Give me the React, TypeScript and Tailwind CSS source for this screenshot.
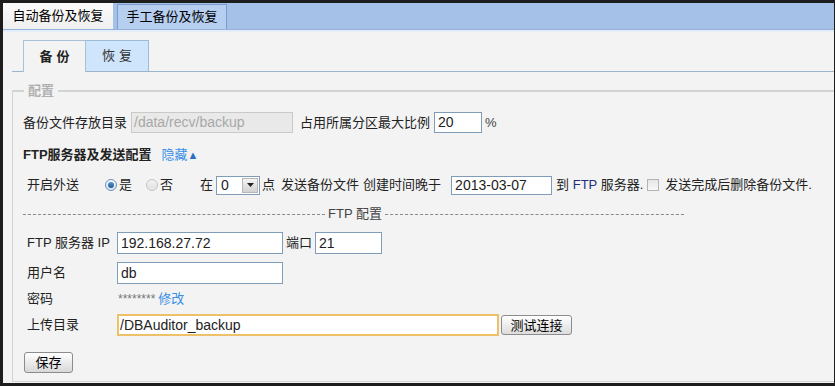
import React from 'react';

const font = { fontFamily: '"Liberation Sans", "Noto Sans CJK SC", sans-serif' };

function Radio({ checked }: { checked: boolean }) {
  return checked ? (
    <span className="flex h-[12px] w-[12px] items-center justify-center rounded-full border border-[#6d8fbd] bg-gradient-to-b from-[#f4f8fc] to-[#d6e2ef]">
      <span className="h-[6px] w-[6px] rounded-full bg-gradient-to-b from-[#5a95d0] to-[#1f5a94]" />
    </span>
  ) : (
    <span className="block h-[12px] w-[12px] rounded-full border border-[#c4c4c4] bg-gradient-to-b from-[#f2f2f2] to-[#e2e2e2]" />
  );
}

function TextBox({ value, className }: { value: string; className: string }) {
  return (
    <div className={`flex items-center border border-[#7f9db9] bg-white pl-[3px] text-[14px] text-[#222] ${className}`}>
      {value}
    </div>
  );
}

function Dashed({ className }: { className: string }) {
  return <div className={`h-0 border-t border-dashed border-[#8a8a8a] ${className}`} />;
}

export default function App() {
  return (
    <div style={font} className="h-[386px] w-[835px] bg-[#1d1d1d] pb-[3px] pl-[3px] pr-[1px] pt-[3px]">
      <div className="flex h-full flex-col overflow-hidden bg-[#f3f3f3] text-[13px] text-[#222]">
        {/* top tabs */}
        <div className="flex h-[27px] items-end border-b border-[#98b1d6] bg-[#a6c1e8]">
          <div className="flex h-[27px] w-[110px] items-center justify-center bg-gradient-to-b from-[#fbfbfb] to-[#f0f0f0] text-[13px] text-black">
            自动备份及恢复
          </div>
          <div className="ml-[4px] flex h-[25px] w-[110px] items-center justify-center border border-b-0 border-[#7c9cc9] bg-[#b6cff1] text-[13px] text-black">
            手工备份及恢复
          </div>
        </div>
        <div className="h-[2px] bg-[#e4eefa]" />

        {/* sub tabs */}
        <div className="ml-[9px] mt-[9px] flex h-[31px] items-end border-b border-[#9cb5cd] pl-[11px]">
          <div className="-mb-px flex h-[32px] w-[63px] items-center justify-center border border-b-0 border-[#a9c1d7] bg-[#f3f3f3] pl-[4px] font-bold tracking-[4px] text-[#222]">
            备份
          </div>
          <div className="flex h-[31px] w-[63px] items-center justify-center border border-b-0 border-l-0 border-[#9dbad6] bg-[#cfe5fb] pl-[4px] tracking-[4px] text-[#333]">
            恢复
          </div>
        </div>

        {/* fieldset */}
        <fieldset className="ml-[9px] mt-[11px] border-b border-l border-t-2 border-[#d3d3d3] pb-[8px] pl-[10px]">
          <legend className="ml-[1px] px-[4px] text-[13px] font-bold leading-[16px] text-[#b0b0b0]">配置</legend>

          <div className="mt-[13px] flex h-[21px] items-center">
            <span>备份文件存放目录</span>
            <div className="ml-[4px] flex h-[21px] w-[162px] items-center border border-[#c9c9c9] bg-[#e9e9e9] pl-[2px] text-[14px] text-[#a8a8a8]">
              /data/recv/backup
            </div>
            <span className="ml-[7px]">占用所属分区最大比例</span>
            <TextBox value="20" className="ml-[4px] h-[21px] w-[48px] text-[#4a2f45]" />
            <span className="ml-[3px] text-[#444]">%</span>
          </div>

          <div className="mt-[12px] flex h-[20px] items-center">
            <span className="font-bold">FTP服务器及发送配置</span>
            <span className="ml-[10px] text-[#3a8ee6]">隐藏</span>
            <span className="text-[11px] text-[#2b6cc4]">▲</span>
          </div>

          <div className="mt-[10px] flex h-[20px] items-center whitespace-nowrap">
            <span className="ml-[4px]">开启外送</span>
            <span className="ml-[26px]"><Radio checked /></span>
            <span className="ml-[2px]">是</span>
            <span className="ml-[14px]"><Radio checked={false} /></span>
            <span className="ml-[2px]">否</span>
            <span className="ml-[27px]">在</span>
            <div className="ml-[3px] flex h-[19px] w-[44px] items-center border border-[#7f9db9] bg-white">
              <span className="flex-1 pl-[4px] text-[14px]">0</span>
              <span className="mr-[1px] flex h-[15px] w-[16px] items-center justify-center border border-[#b7b7b7] bg-gradient-to-b from-[#f4f4f4] to-[#d2d2d2]">
                <svg width="7" height="4" viewBox="0 0 7 4"><path d="M0 0h7L3.5 4z" fill="#222" /></svg>
              </span>
            </div>
            <span className="ml-[2px]">点</span>
            <span className="ml-[6px]">发送备份文件</span>
            <span className="ml-[4px]">创建时间晚于</span>
            <TextBox value="2013-03-07" className="ml-[10px] h-[19px] w-[101px]" />
            <span className="ml-[4px]">
              到 <span className="text-[#22307a]">FTP</span> 服务器.
            </span>
            <span className="ml-[4px] h-[12px] w-[12px] border border-[#b3b3b3] bg-gradient-to-b from-[#e6e6e6] to-[#f8f8f8]" />
            <span className="ml-[6px]">发送完成后删除备份文件.</span>
          </div>

          <div className="mt-[9px] flex h-[20px] items-center">
            <Dashed className="w-[302px]" />
            <span className="px-[3px] text-[#444]">FTP 配置</span>
            <Dashed className="w-[299px]" />
          </div>

          <div className="mt-[8px] flex h-[22px] items-center">
            <span className="ml-[4px] w-[90px]">FTP 服务器 IP</span>
            <TextBox value="192.168.27.72" className="h-[22px] w-[166px]" />
            <span className="ml-[3px]">端口</span>
            <TextBox value="21" className="ml-[3px] h-[22px] w-[67px]" />
          </div>

          <div className="mt-[8px] flex h-[22px] items-center">
            <span className="ml-[4px] w-[90px]">用户名</span>
            <TextBox value="db" className="h-[22px] w-[166px]" />
          </div>

          <div className="mt-[2px] flex h-[26px] items-center">
            <span className="ml-[4px] w-[91px]">密码</span>
            <span className="text-[12px] text-[#777]">********</span>
            <span className="ml-[3px] text-[#3a8ee6]">修改</span>
          </div>

          <div className="mt-[2px] flex h-[22px] items-center">
            <span className="ml-[4px] w-[90px]">上传目录</span>
            <div className="flex h-[22px] w-[382px] items-center border-2 border-[#eec067] bg-white pl-[1px] text-[14px] text-[#222]">
              /DBAuditor_backup
            </div>
            <button className="ml-[2px] h-[20px] w-[71px] rounded-[3px] border border-[#8c8c8c] bg-gradient-to-b from-[#ffffff] to-[#dcdcdc] text-[13px] text-black">
              测试连接
            </button>
          </div>

          <button className="ml-[1px] mt-[16px] h-[21px] w-[49px] rounded-[3px] border border-[#8c8c8c] bg-gradient-to-b from-[#ffffff] to-[#d8d8d8] text-[13px] text-black">
            保存
          </button>
        </fieldset>
      </div>
    </div>
  );
}
